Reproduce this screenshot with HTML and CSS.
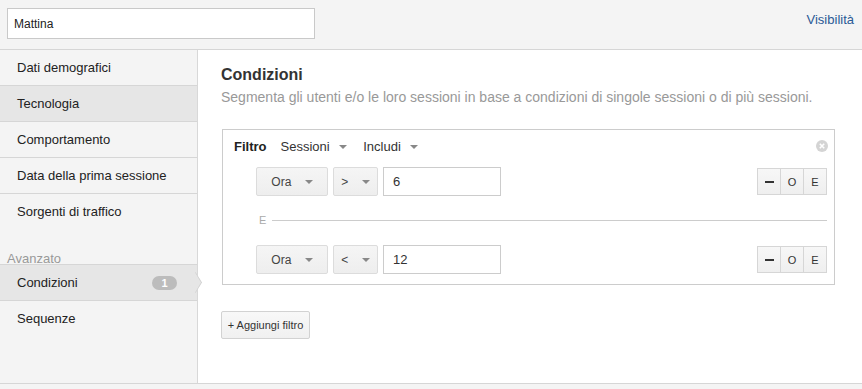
FILE: index.html
```html
<html lang="it">
<head>
    <meta charset="UTF-8">
    <title>Segmento - Condizioni</title>
    <link rel="stylesheet" href="styles.css">
</head>
<body>
    <div class="topbar">
        <input type="text" class="nome" value="Mattina">
        <a href="#" class="visibilita">Visibilità</a>
    </div>
    <div class="layout">
        <div class="sidebar">
            <div class="voce">Dati demografici</div>
            <div class="voce scura">Tecnologia</div>
            <div class="voce">Comportamento</div>
            <div class="voce">Data della prima sessione</div>
            <div class="voce senza-bordo">Sorgenti di traffico</div>
            <div class="sezione">Avanzato</div>
            <div class="voce scura attiva">Condizioni <span class="badge">1</span></div>
            <div class="voce senza-bordo">Sequenze</div>
        </div>
        <div class="main">
            <h2>Condizioni</h2>
            <p class="descr">Segmenta gli utenti e/o le loro sessioni in base a condizioni di singole sessioni o di più sessioni.</p>
            <div class="filtro">
                <div class="filtro-head">
                    <b>Filtro</b>
                    <span class="menu">Sessioni <i class="freccia"></i></span>
                    <span class="menu">Includi <i class="freccia"></i></span>
                    <span class="chiudi">
                        <svg width="12" height="12" viewBox="0 0 12 12"><circle cx="6" cy="6" r="6" fill="#d4d4d4"/><path d="M3.8 3.8 L8.2 8.2 M8.2 3.8 L3.8 8.2" stroke="#fff" stroke-width="1.6"/></svg>
                    </span>
                </div>
                <div class="riga">
                    <button class="sel sel-dim">Ora <i class="freccia"></i></button>
                    <button class="sel sel-op">&gt; <i class="freccia"></i></button>
                    <input type="text" class="valore" value="6">
                    <div class="gruppo">
                        <button class="meno"><span></span></button>
                        <button>O</button>
                        <button>E</button>
                    </div>
                </div>
                <div class="separatore"><span>E</span><hr></div>
                <div class="riga">
                    <button class="sel sel-dim">Ora <i class="freccia"></i></button>
                    <button class="sel sel-op">&lt; <i class="freccia"></i></button>
                    <input type="text" class="valore" value="12">
                    <div class="gruppo">
                        <button class="meno"><span></span></button>
                        <button>O</button>
                        <button>E</button>
                    </div>
                </div>
            </div>
            <button class="aggiungi">+ Aggiungi filtro</button>
        </div>
    </div>
</body>
</html>
```

FILE: styles.css
```css
body { font-family: "Liberation Sans", Arial, sans-serif; font-size: 13px; color: #222; margin: 0; padding: 0; background: #f4f4f4; }
.topbar { height: 50px; box-sizing: border-box; padding: 8px 8px 0 7px; display: flex; align-items: flex-start; justify-content: space-between; border-bottom: 1px solid #d6d6d6; background: #f4f4f4; }
.nome { width: 308px; height: 31px; box-sizing: border-box; border: 1px solid #c9c9c9; padding: 0 6px; font-family: inherit; font-size: 12px; color: #222; background: #fff; outline: none; }
.visibilita { color: #2a5a96; text-decoration: none; font-size: 13px; margin-top: 4px; }
.layout { display: flex; height: 333px; border-bottom: 1px solid #d6d6d6; background: #fff; }
.sidebar { width: 197px; flex: none; background: #f4f4f4; border-right: 1px solid #d8d8d8; }
.voce { position: relative; height: 35px; line-height: 35px; padding-left: 17px; border-bottom: 1px solid #d6d6d6; color: #222; }
.voce.scura { background: #e6e6e6; }
.voce.senza-bordo { border-bottom: none; }
.sezione { height: 36px; box-sizing: border-box; padding: 22px 0 0 7px; line-height: 15px; color: #999; border-bottom: 1px solid #d6d6d6; }
.badge { position: absolute; left: 152px; top: 11px; width: 25px; height: 14px; line-height: 14px; border-radius: 7px; background: #bcbcbc; color: #fff; font-size: 11px; font-weight: bold; text-align: center; }
.attiva::after { content: ""; position: absolute; right: -6px; top: 10px; width: 14px; height: 14px; background: #e6e6e6; border-top: 1px solid #d0d0d0; border-right: 1px solid #d0d0d0; transform: scaleX(0.6) rotate(45deg); z-index: 1; }
.main { flex: 1; padding: 15px 27px 0 23px; }
.main h2 { margin: 0; font-size: 16px; font-weight: bold; color: #333; line-height: 20px; }
.descr { margin: 2px 0 0; color: #999; font-size: 14px; line-height: 20px; }
.filtro { margin: 22px 0 0 1px; border: 1px solid #ccc; padding: 6px 7px 10px 11px; }
.filtro-head { display: flex; align-items: center; height: 20px; }
.filtro-head b { margin-right: 14px; }
.menu { margin-right: 16px; color: #333; }
.freccia { display: inline-block; width: 0; height: 0; border-left: 4px solid transparent; border-right: 4px solid transparent; border-top: 4px solid #888; margin-left: 6px; vertical-align: 2px; }
.chiudi { margin-left: auto; height: 12px; margin-right: -1px; }
.riga { display: flex; align-items: center; margin: 11px 0 0 22px; height: 29px; }
.separatore + .riga { margin-top: 18px; }
.sel { height: 29px; box-sizing: border-box; border: 1px solid #dcdcdc; border-radius: 2px; background: linear-gradient(#f5f5f5, #eeeeee); font-family: inherit; font-size: 12px; color: #444; padding: 0; margin-right: 5px; }
.sel-dim { width: 72px; }
.sel-op { width: 45px; }
.sel .freccia { margin-left: 10px; }
.valore { width: 118px; height: 29px; box-sizing: border-box; border: 1px solid #ccc; padding: 0 9px; font-family: inherit; font-size: 13px; color: #333; outline: none; }
.gruppo { margin-left: auto; display: flex; }
.gruppo button { width: 24px; height: 27px; box-sizing: border-box; border: 1px solid #d6d6d6; margin-left: -1px; background: linear-gradient(#f7f7f7, #efefef); font-family: inherit; font-size: 11px; color: #333; padding: 0; }
.gruppo .meno span { display: inline-block; width: 9px; height: 2px; background: #333; vertical-align: middle; }
.separatore { display: flex; align-items: center; height: 14px; margin: 17px 0 0 25px; }
.separatore span { color: #aaa; font-size: 11px; margin-right: 6px; }
.separatore hr { flex: 1; margin: 0; border: none; border-top: 1px solid #ccc; }
.aggiungi { margin-top: 26px; height: 28px; width: 89px; box-sizing: border-box; border: 1px solid #d2d2d2; border-radius: 2px; background: linear-gradient(#f8f8f8, #f0f0f0); font-family: inherit; font-size: 11px; color: #333; padding: 0; }
```
